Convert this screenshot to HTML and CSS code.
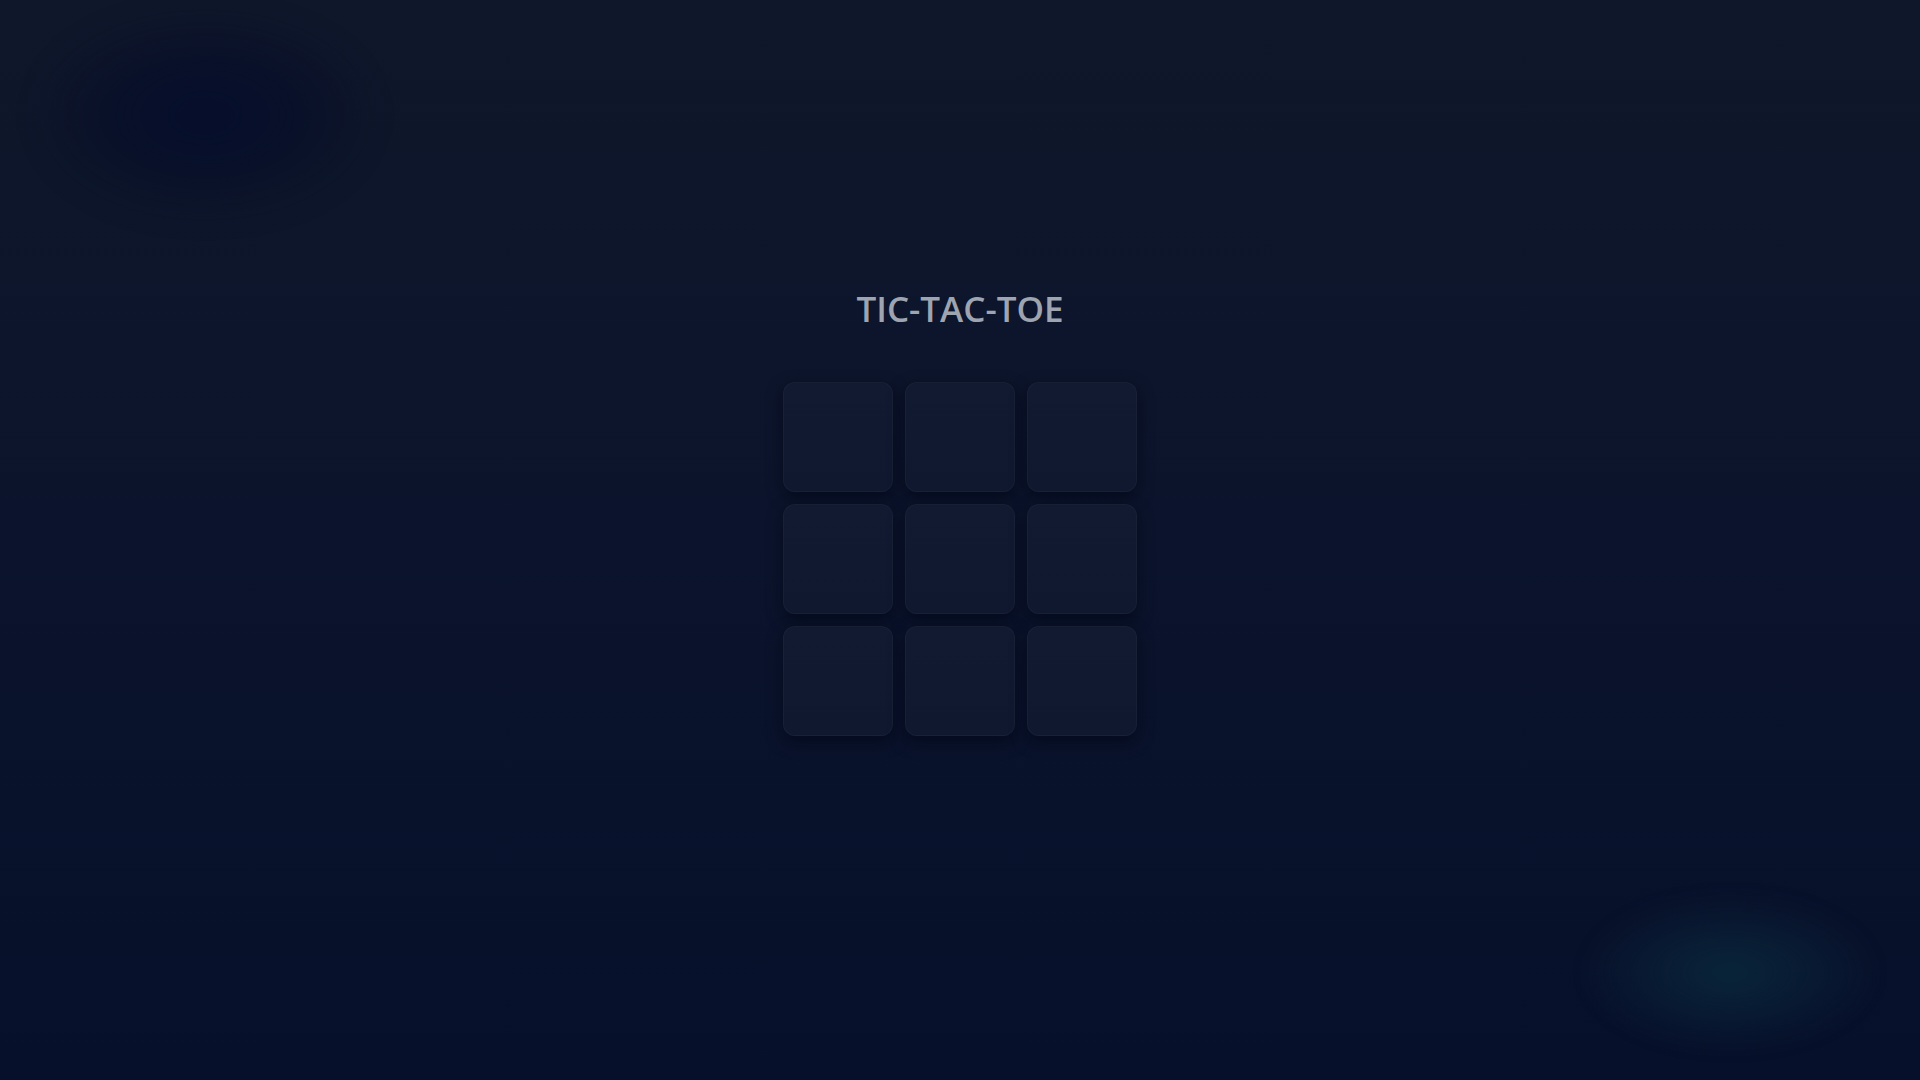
FILE: index.html
```html
<!DOCTYPE html>
<html lang="en">
<head>
<meta charset="utf-8">
<title>Tic-Tac-Toe</title>
<link rel="stylesheet" href="styles.css">
</head>
<body>
<div class="blob blob-blue"></div>
<div class="blob blob-teal"></div>
<main class="game">
  <h1 class="title">TIC-TAC-TOE</h1>
  <div class="board">
    <button class="cell"></button>
    <button class="cell"></button>
    <button class="cell"></button>
    <button class="cell"></button>
    <button class="cell"></button>
    <button class="cell"></button>
    <button class="cell"></button>
    <button class="cell"></button>
    <button class="cell"></button>
  </div>
</main>
</body>
</html>
```
FILE: styles.css
```css
* { box-sizing: border-box; }
html, body { height: 100%; }
body {
  margin: 0;
  overflow: hidden;
  background: linear-gradient(180deg, #0f172a 0%, #0b142c 50%, #07102a 100%);
  font-family: "Open Sans", "Noto Sans", sans-serif;
  position: relative;
}
.blob {
  position: absolute;
  border-radius: 50%;
  pointer-events: none;
}
.blob-blue {
  left: 40px;
  top: 15px;
  width: 330px;
  height: 200px;
  background: radial-gradient(ellipse at center, rgba(2, 10, 45, 0.7) 0%, rgba(3, 10, 40, 0.4) 45%, rgba(3, 10, 40, 0) 75%);
  filter: blur(14px);
}
.blob-teal {
  left: 1590px;
  top: 900px;
  width: 280px;
  height: 145px;
  background: radial-gradient(ellipse at center, rgba(10, 46, 64, 0.7) 0%, rgba(10, 40, 62, 0.38) 45%, rgba(10, 40, 62, 0) 75%);
  filter: blur(10px);
}
.game {
  position: relative;
  display: flex;
  flex-direction: column;
  align-items: center;
  padding-top: 285px;
}
.title {
  margin: 0;
  font-size: 35px;
  line-height: 48px;
  font-weight: 600;
  letter-spacing: 0;
  color: #9ea4b0;
}
.board {
  margin-top: 49px;
  display: grid;
  grid-template-columns: repeat(3, 110px);
  grid-template-rows: repeat(3, 110px);
  gap: 12px;
}
.cell {
  border: 1px solid rgba(255, 255, 255, 0.03);
  border-radius: 12px;
  background: linear-gradient(180deg, #111a30 0%, #0f182e 100%);
  box-shadow: 0 6px 16px rgba(2, 6, 20, 0.55);
  padding: 0;
}
```
